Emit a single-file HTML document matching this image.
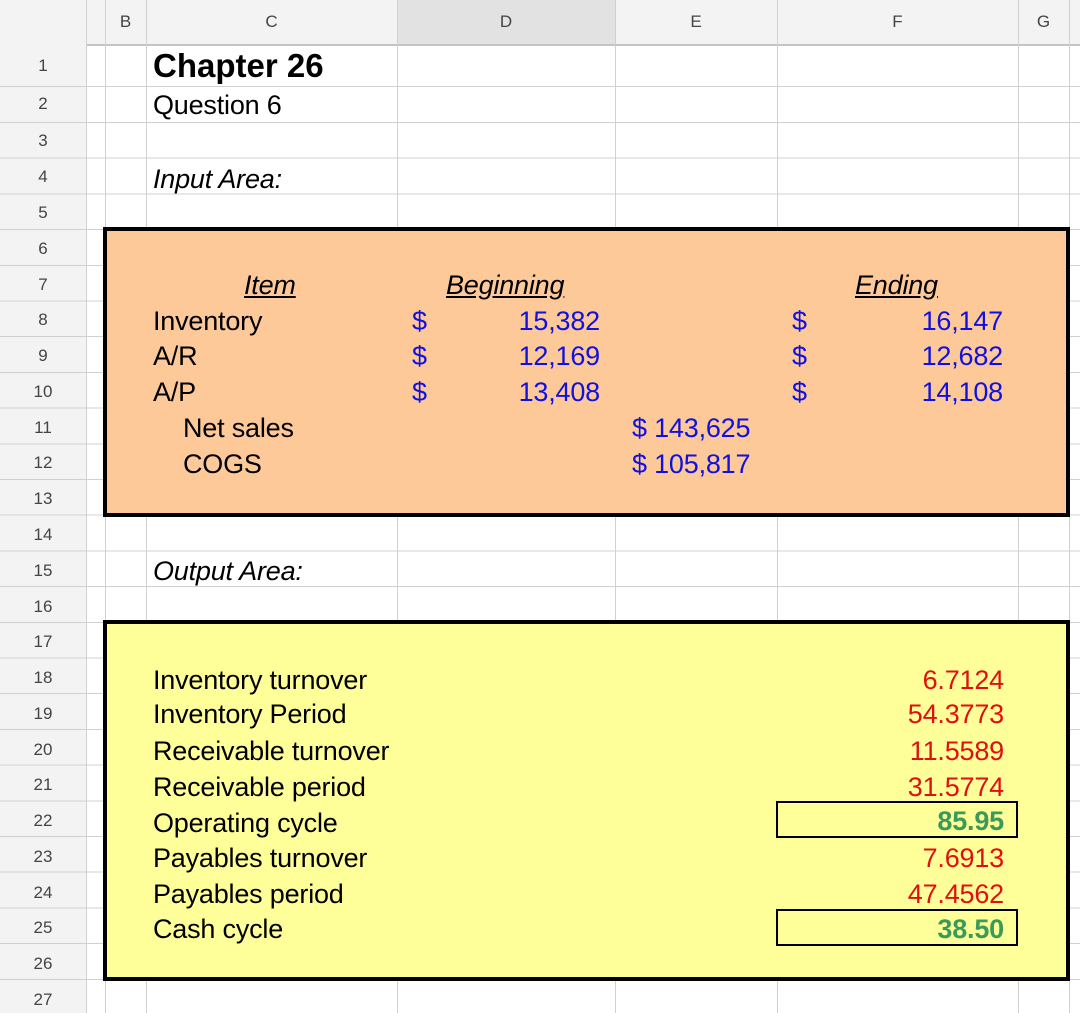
<!DOCTYPE html>
<html><head><meta charset="utf-8"><style>
body{margin:0;width:1080px;height:1013px;overflow:hidden;background:#fff;font-family:"Liberation Sans",Arial,sans-serif;position:relative}
.hl{position:absolute;left:0;width:1080px;height:1px;background:#d0d0d0}
.vl{position:absolute;top:0;width:1px;height:1013px;background:#d0d0d0}
.hdr{position:absolute;left:0;top:0;width:1080px;height:44px;background:#f3f3f3;border-bottom:2px solid #c4c4c4}
.rh{position:absolute;left:0;width:86px;background:#f3f3f3;border-right:1px solid #c4c4c4;top:0;height:1013px}
.n{position:absolute;left:0;width:86px;text-align:center;font-size:17px;color:#444}
.ch{position:absolute;top:12px;font-size:17px;color:#444;text-align:center}
.t{position:absolute;font-size:27px;letter-spacing:-0.2px;white-space:nowrap;line-height:36px}
.r{text-align:right}
.b{color:#1010e0}.red{color:#e01010}.g{color:#3a9a5a;font-weight:bold}
.box{position:absolute;border:4px solid #000;box-sizing:border-box}
</style></head><body>
<div class="hdr"></div>
<div class="rh"></div>
<div style="position:absolute;left:397px;top:0;width:218px;height:44px;background:#e2e2e2"></div>
<div class="ch" style="left:105px;width:41px">B</div>
<div class="ch" style="left:146px;width:251px">C</div>
<div class="ch" style="left:397px;width:218px">D</div>
<div class="ch" style="left:615px;width:162px">E</div>
<div class="ch" style="left:777px;width:241px">F</div>
<div class="ch" style="left:1018px;width:51px">G</div>
<div class="vl" style="left:86px"></div><div class="vl" style="left:105px"></div><div class="vl" style="left:146px"></div><div class="vl" style="left:397px"></div><div class="vl" style="left:615px"></div><div class="vl" style="left:777px"></div><div class="vl" style="left:1018px"></div><div class="vl" style="left:1069px"></div>
<div class="hl" style="top:86px"></div>
<div style="position:absolute;left:0;top:122px;width:1080px;height:891px;background:repeating-linear-gradient(to bottom,#d0d0d0 0,#d0d0d0 1px,transparent 1px,transparent 35.7px)"></div>
<div class="n" style="top:56px">1</div><div class="n" style="top:94px">2</div>
<div class="n" style="top:131px">3</div><div class="n" style="top:167px">4</div><div class="n" style="top:203px">5</div><div class="n" style="top:239px">6</div><div class="n" style="top:275px">7</div><div class="n" style="top:310px">8</div><div class="n" style="top:346px">9</div><div class="n" style="top:382px">10</div><div class="n" style="top:418px">11</div><div class="n" style="top:453px">12</div><div class="n" style="top:489px">13</div><div class="n" style="top:525px">14</div><div class="n" style="top:561px">15</div><div class="n" style="top:597px">16</div><div class="n" style="top:632px">17</div><div class="n" style="top:668px">18</div><div class="n" style="top:704px">19</div><div class="n" style="top:740px">20</div><div class="n" style="top:775px">21</div><div class="n" style="top:811px">22</div><div class="n" style="top:847px">23</div><div class="n" style="top:883px">24</div><div class="n" style="top:918px">25</div><div class="n" style="top:954px">26</div><div class="n" style="top:990px">27</div>

<div class="t" style="left:153px;top:48px;font-size:33px;font-weight:bold;letter-spacing:0">Chapter 26</div>
<div class="t" style="left:153px;top:87px">Question 6</div>
<div class="t" style="left:153px;top:161px;font-style:italic">Input Area:</div>
<div class="t" style="left:153px;top:553px;font-style:italic">Output Area:</div>

<div class="box" style="left:103px;top:227px;width:967px;height:290px;background:#fdc999"></div>
<div class="t" style="left:244px;top:267px;font-style:italic;text-decoration:underline">Item</div>
<div class="t" style="left:446px;top:267px;font-style:italic;text-decoration:underline">Beginning</div>
<div class="t" style="left:855px;top:267px;font-style:italic;text-decoration:underline">Ending</div>
<div class="t" style="left:153px;top:303px">Inventory</div>
<div class="t" style="left:153px;top:338px">A/R</div>
<div class="t" style="left:153px;top:374px">A/P</div>
<div class="t" style="left:183px;top:410px">Net sales</div>
<div class="t" style="left:183px;top:446px">COGS</div>
<div class="t b" style="left:412px;top:303px">$</div><div class="t b" style="left:412px;top:338px">$</div><div class="t b" style="left:412px;top:374px">$</div>
<div class="t b r" style="left:450px;width:150px;top:303px">15,382</div>
<div class="t b r" style="left:450px;width:150px;top:338px">12,169</div>
<div class="t b r" style="left:450px;width:150px;top:374px">13,408</div>
<div class="t b" style="left:792px;top:303px">$</div><div class="t b" style="left:792px;top:338px">$</div><div class="t b" style="left:792px;top:374px">$</div>
<div class="t b r" style="left:850px;width:153px;top:303px">16,147</div>
<div class="t b r" style="left:850px;width:153px;top:338px">12,682</div>
<div class="t b r" style="left:850px;width:153px;top:374px">14,108</div>
<div class="t b" style="left:632px;top:410px">$ 143,625</div>
<div class="t b" style="left:632px;top:446px">$ 105,817</div>

<div class="box" style="left:103px;top:620px;width:967px;height:361px;background:#ffff99"></div>
<div class="t" style="left:153px;top:662px">Inventory turnover</div>
<div class="t" style="left:153px;top:696px">Inventory Period</div>
<div class="t" style="left:153px;top:733px">Receivable turnover</div>
<div class="t" style="left:153px;top:769px">Receivable period</div>
<div class="t" style="left:153px;top:805px">Operating cycle</div>
<div class="t" style="left:153px;top:840px">Payables turnover</div>
<div class="t" style="left:153px;top:876px">Payables period</div>
<div class="t" style="left:153px;top:911px">Cash cycle</div>
<div style="position:absolute;left:776px;top:801px;width:242px;height:37px;border:2px solid #000;box-sizing:border-box"></div>
<div style="position:absolute;left:776px;top:909px;width:242px;height:37px;border:2px solid #000;box-sizing:border-box"></div>
<div class="t red r" style="left:800px;width:204px;top:662px">6.7124</div>
<div class="t red r" style="left:800px;width:204px;top:696px">54.3773</div>
<div class="t red r" style="left:800px;width:204px;top:733px">11.5589</div>
<div class="t red r" style="left:800px;width:204px;top:769px">31.5774</div>
<div class="t g r" style="left:800px;width:204px;top:803px">85.95</div>
<div class="t red r" style="left:800px;width:204px;top:840px">7.6913</div>
<div class="t red r" style="left:800px;width:204px;top:876px">47.4562</div>
<div class="t g r" style="left:800px;width:204px;top:911px">38.50</div>
</body></html>
